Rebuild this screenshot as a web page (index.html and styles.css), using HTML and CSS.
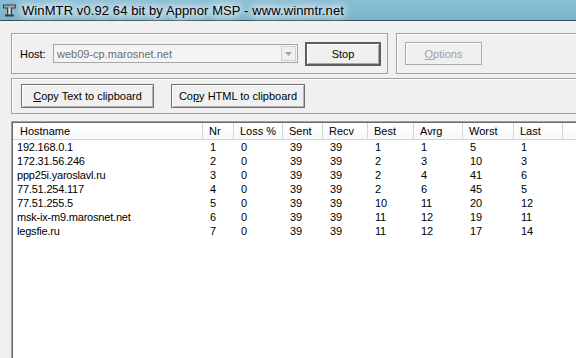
FILE: index.html
```html
<!DOCTYPE html>
<html>
<head>
<meta charset="utf-8">
<link rel="stylesheet" href="styles.css">
</head>
<body>
<div class="titlebar">
  <svg class="appicon" width="13" height="13" viewBox="0 0 13 13">
    <path d="M0 0.5h13v4h-4v6h2v2h-9v-2h2v-6h-4z" fill="#3c3c3c"/>
    <path d="M1 1.5h11v2h-4v7h-3v-7h-4z" fill="#a8a8a8"/>
    <path d="M6 4h1v6h-1z" fill="#e0e0e0"/>
  </svg>
  <span class="title">WinMTR v0.92 64 bit by Appnor MSP - www.winmtr.net</span>
</div>
<div class="content">
  <div class="toprow">
    <div class="group group-host">
      <span class="label">Host:</span>
      <div class="combo">
        <span class="combo-text">web09-cp.marosnet.net</span>
        <span class="combo-btn"><svg width="7" height="4" viewBox="0 0 7 4"><path d="M0 0h7l-3.5 4z" fill="#a6a6a6"/></svg></span>
      </div>
      <button class="btn btn-default btn-stop">Stop</button>
    </div>
    <div class="group group-opts">
      <button class="btn btn-disabled btn-opts"><u>O</u>ptions</button>
    </div>
  </div>
  <div class="group group-copy">
    <button class="btn btn-copy-text"><u>C</u>opy Text to clipboard</button>
    <button class="btn btn-copy-html">Co<u>p</u>y HTML to clipboard</button>
  </div>
  <div class="list">
    <div class="row head">
      <div class="hc first">Hostname</div>
      <div class="hc">Nr</div>
      <div class="hc">Loss %</div>
      <div class="hc">Sent</div>
      <div class="hc">Recv</div>
      <div class="hc">Best</div>
      <div class="hc">Avrg</div>
      <div class="hc">Worst</div>
      <div class="hc">Last</div>
      <div class="hc filler"></div>
    </div>
    <div class="row"><div class="c first">192.168.0.1</div><div class="c">1</div><div class="c">0</div><div class="c">39</div><div class="c">39</div><div class="c">1</div><div class="c">1</div><div class="c">5</div><div class="c">1</div><div></div></div>
    <div class="row"><div class="c first">172.31.56.246</div><div class="c">2</div><div class="c">0</div><div class="c">39</div><div class="c">39</div><div class="c">2</div><div class="c">3</div><div class="c">10</div><div class="c">3</div><div></div></div>
    <div class="row"><div class="c first">ppp25i.yaroslavl.ru</div><div class="c">3</div><div class="c">0</div><div class="c">39</div><div class="c">39</div><div class="c">2</div><div class="c">4</div><div class="c">41</div><div class="c">6</div><div></div></div>
    <div class="row"><div class="c first">77.51.254.117</div><div class="c">4</div><div class="c">0</div><div class="c">39</div><div class="c">39</div><div class="c">2</div><div class="c">6</div><div class="c">45</div><div class="c">5</div><div></div></div>
    <div class="row"><div class="c first">77.51.255.5</div><div class="c">5</div><div class="c">0</div><div class="c">39</div><div class="c">39</div><div class="c">10</div><div class="c">11</div><div class="c">20</div><div class="c">12</div><div></div></div>
    <div class="row"><div class="c first">msk-ix-m9.marosnet.net</div><div class="c">6</div><div class="c">0</div><div class="c">39</div><div class="c">39</div><div class="c">11</div><div class="c">12</div><div class="c">19</div><div class="c">11</div><div></div></div>
    <div class="row"><div class="c first">legsfie.ru</div><div class="c">7</div><div class="c">0</div><div class="c">39</div><div class="c">39</div><div class="c">11</div><div class="c">12</div><div class="c">17</div><div class="c">14</div><div></div></div>
  </div>
</div>
</body>
</html>
```

FILE: styles.css
```css
html, body {
  margin: 0;
  padding: 0;
}
body {
  width: 576px;
  height: 358px;
  overflow: hidden;
  background: #f0f0f0;
  font-family: "Liberation Sans", Arial, sans-serif;
  font-size: 11px;
  color: #000;
}
.titlebar {
  box-sizing: border-box;
  height: 21px;
  border-bottom: 1px solid #34505e;
  background: linear-gradient(#89bfd5, #7cb3ca);
  display: flex;
  align-items: center;
  padding-left: 3px;
  gap: 6px;
}
.appicon {
  flex: none;
  margin-top: 1px;
}
.title {
  font-size: 13px;
  letter-spacing: 0.1px;
  white-space: nowrap;
  color: #000;
  text-shadow: 0 0 6px #fff, 0 0 10px #fff, 0 0 12px rgba(255,255,255,.9), 0 0 14px rgba(255,255,255,.8);
}
.content {
  padding: 12px 0 0 11px;
}
.toprow {
  display: flex;
  gap: 8px;
  width: 700px;
}
.group {
  box-sizing: border-box;
  border: 1px solid #a0a0a0;
  box-shadow: inset 1px 1px 0 #fff;
  display: flex;
  align-items: center;
}
.group-host {
  width: 377px;
  height: 41px;
  padding-left: 8px;
}
.group-opts {
  width: 260px;
  height: 41px;
  padding-left: 8px;
}
.label {
  width: 33px;
  flex: none;
}
.combo {
  box-sizing: border-box;
  width: 245px;
  height: 19px;
  border: 1px solid #a6a6a6;
  background: #f4f4f4;
  display: flex;
  align-items: center;
  justify-content: space-between;
  padding-left: 3px;
  padding-right: 1px;
}
.combo-text {
  color: #6d6d6d;
}
.combo-btn {
  box-sizing: border-box;
  width: 15px;
  height: 15px;
  border: 1px solid #cfcfcf;
  background: #f0f0f0;
  display: flex;
  align-items: center;
  justify-content: center;
}
.btn {
  box-sizing: border-box;
  font-family: "Liberation Sans", Arial, sans-serif;
  font-size: 11px;
  color: #000;
  background: #f0f0f0;
  border: 1px solid #6f6f6f;
  box-shadow: inset 1px 1px 0 #fff, inset -1px -1px 0 #b4b4b4;
  padding: 0;
  margin: 0;
  height: 24px;
}
.btn-default {
  border: 2px solid #5e5e5e;
  box-shadow: inset 1px 1px 0 #fff, inset -1px -1px 0 #a8a8a8;
}
.btn-stop {
  width: 76px;
  margin-left: 7px;
}
.btn-disabled {
  color: #a0a0a0;
  border-color: #ababab;
  box-shadow: inset 1px 1px 0 #fff;
}
.btn-opts {
  width: 77px;
  height: 23px;
}
.group-copy {
  width: 620px;
  height: 36px;
  margin-top: 4px;
  padding-left: 9px;
  gap: 17px;
}
.btn-copy-text {
  width: 133px;
}
.btn-copy-html {
  width: 134px;
}
.list {
  box-sizing: border-box;
  margin-top: 7px;
  width: 620px;
  height: 240px;
  background: #fff;
  border-top: 1px solid #a0a0a0;
  border-left: 1px solid #a0a0a0;
  box-shadow: inset 1px 1px 0 #696969;
  padding: 1px 0 0 1px;
}
.row {
  display: grid;
  grid-template-columns: 190px 31px 49px 40px 45px 46px 49px 51px 49px 1fr;
  height: 14px;
  line-height: 14px;
  letter-spacing: -0.2px;
}
.row.head {
  height: 17px;
  line-height: 16px;
  box-sizing: border-box;
  border-bottom: 1px solid #d5d5d5;
  background: linear-gradient(#ffffff, #f6f7f9);
  letter-spacing: 0;
}
.hc {
  border-right: 1px solid #d5d5d5;
  padding-left: 6px;
  white-space: nowrap;
  overflow: hidden;
}
.hc.first {
  padding-left: 7px;
}
.hc.filler {
  border-right: none;
}
.c {
  padding-left: 7px;
  white-space: nowrap;
}
.c.first {
  padding-left: 4px;
}
```
